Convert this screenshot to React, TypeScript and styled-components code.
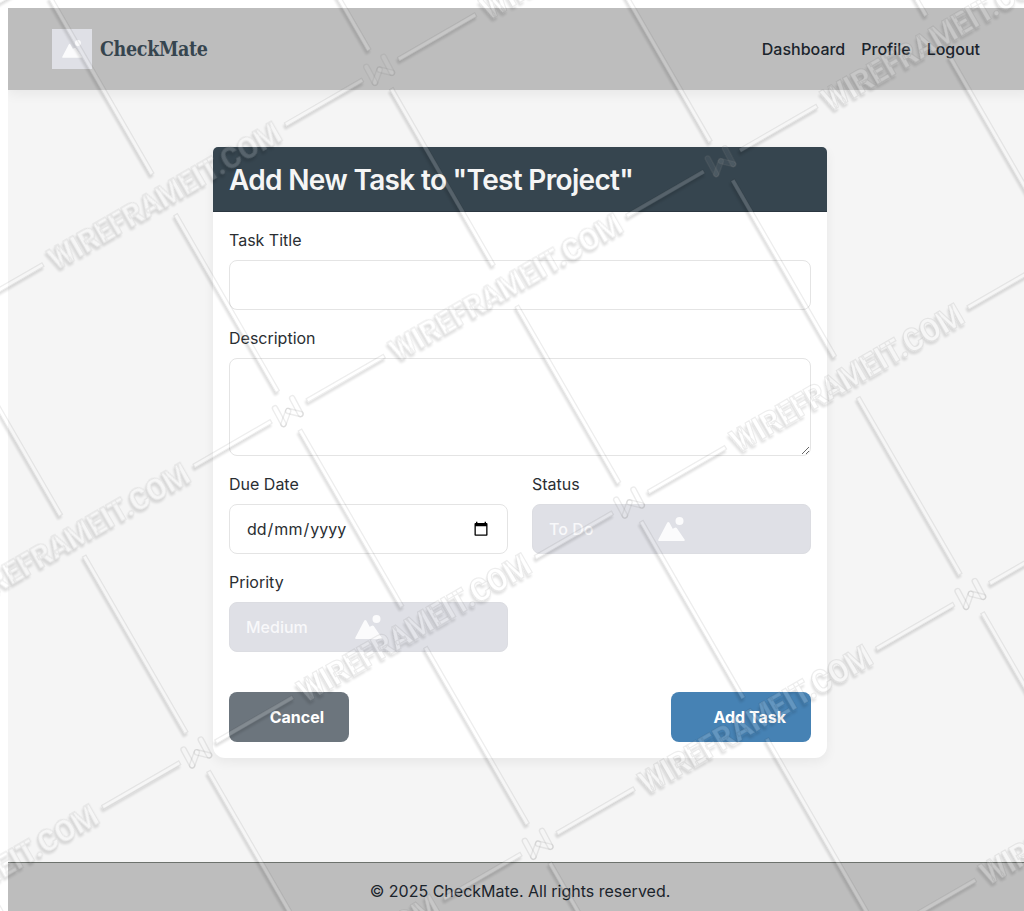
import React from "react";
import styled, { createGlobalStyle } from "styled-components";

const GlobalStyle = createGlobalStyle`
  *, *::before, *::after { box-sizing: border-box; }
  html { overflow: hidden; background: #fff; }
  body {
    margin: 8px 0 0 8px;
    font-family: Inter, "Liberation Sans", sans-serif;
    font-size: 16px;
    line-height: 24px;
    color: #2a2e32;
  }
`;

const Page = styled.div`
  display: flex;
  flex-direction: column;
  width: 1024px;
  height: 911px;
  background: #f5f5f5;
`;

const TopBar = styled.header`
  display: flex;
  align-items: center;
  justify-content: space-between;
  flex: none;
  height: 82px;
  padding: 0 52px 0 44px;
  background: #bdbdbd;
  box-shadow: 0 4px 12px rgba(0, 0, 0, 0.06);
`;

const Brand = styled.div`
  display: flex;
  align-items: center;
  gap: 8px;
`;

const LogoTile = styled.span`
  display: flex;
  align-items: center;
  justify-content: center;
  width: 40px;
  height: 40px;
  background: #dfe0e6;
`;

const BrandName = styled.span`
  padding-top: 2px;
  font-family: "Roboto Slab", "DejaVu Serif Condensed", "DejaVu Serif", serif;
  font-size: 19.5px;
  font-weight: 700;
  letter-spacing: -0.35px;
  color: #36454f;
`;

const Nav = styled.nav`
  display: flex;
  gap: 16px;
`;

const NavLink = styled.a`
  font-weight: 500;
  color: #1b242c;
`;

const Main = styled.main`
  display: flex;
  flex: none;
  justify-content: center;
  align-items: flex-start;
  height: 772px;
  padding-top: 57px;
`;

const Card = styled.section`
  width: 614px;
  background: #fff;
  border-radius: 5px 5px 12px 12px;
  box-shadow: 0 4px 12px rgba(0, 0, 0, 0.06);
`;

const CardHeader = styled.div`
  height: 65px;
  padding: 16px;
  background: #36454f;
  border-bottom: 1px solid #2b3740;
  border-radius: 5px 5px 0 0;
`;

const CardTitle = styled.h1`
  margin: 0;
  font-size: 28px;
  font-weight: 600;
  line-height: 34px;
  letter-spacing: -0.68px;
  color: #f5f5f5;
  white-space: nowrap;
`;

const Form = styled.form`
  display: flex;
  flex-direction: column;
  gap: 16px;
  padding: 16px;
`;

const Field = styled.div`
  display: flex;
  flex-direction: column;
  gap: 8px;
`;

const FieldGrid = styled.div`
  display: grid;
  grid-template-columns: 1fr 1fr;
  gap: 16px 24px;
`;

const TextInput = styled.input`
  height: 50px;
  padding: 12px 16px;
  border: 1px solid #e4e4e4;
  border-radius: 8px;
  background: #fff;
  font: inherit;
`;

const TextArea = styled.textarea`
  display: block;
  height: 98px;
  padding: 12px 16px;
  border: 1px solid #e4e4e4;
  border-radius: 8px;
  background: #fff;
  font: inherit;
  resize: vertical;
`;

const DateBox = styled.div`
  display: flex;
  align-items: center;
  justify-content: space-between;
  height: 50px;
  padding: 0 18px 0 16px;
  border: 1px solid #e4e4e4;
  border-radius: 8px;
`;

const DateParts = styled.span`
  display: flex;
`;

const DatePart = styled.span`
  padding: 0 1px;
`;

const SelectBox = styled.div`
  display: grid;
  grid-template-columns: 1fr auto 1fr;
  align-items: center;
  height: 50px;
  padding: 0 16px;
  border: 1px solid #dcdde2;
  border-radius: 8px;
  background: #dfe0e6;
  font-weight: 500;
  color: #f8f8fa;
`;

const Actions = styled.div`
  display: flex;
  justify-content: space-between;
  padding-top: 24px;
`;

const Button = styled.button<{ $primary?: boolean }>`
  width: ${(p) => (p.$primary ? 140 : 120)}px;
  height: 50px;
  padding: 0 25px 0 0;
  border: 0;
  border-radius: 8px;
  background: ${(p) => (p.$primary ? "#4682b4" : "#6c757d")};
  color: #fff;
  font: inherit;
  font-weight: 700;
  text-align: right;
`;

const Footer = styled.footer`
  flex: none;
  height: 57px;
  padding-top: 16px;
  border-top: 1px solid #6d726d;
  background: #bdbdbd;
  text-align: center;
  color: #1b242c;
`;

const Overlay = styled.svg`
  position: fixed;
  inset: 0;
  pointer-events: none;
`;

function Mountains({ width }: { width: number }) {
  return (
    <svg width={width} height={(width * 24) / 27} viewBox="0 0 27 24" fill="#fbfbfc">
      <circle cx="21.5" cy="4" r="4" />
      <path d="M9.3 5.6Q10.3 4.2 11.3 5.6L14.7 11.8L16.9 10.7Q17.8 10 18.7 11L26.6 22.6Q27.2 24 25.8 24H1.2Q-.3 24 .4 22.6Z" />
    </svg>
  );
}

function CalendarIcon() {
  return (
    <svg width="16" height="16" viewBox="0 0 16 16">
      <path
        fill="#000"
        fillRule="evenodd"
        d="M3 .7h1.4V2h7.2V.7H13V2h.6q.9 0 .9.9v11q0 .8-.9.8H2.4q-.9 0-.9-.8v-11q0-.9.9-.9H3zM2.8 5.2v8.2h10.4V5.2z"
      />
    </svg>
  );
}

const ORIGIN = { x: 289, y: 411 };
const STEP = { x: 341.3, y: 91.4 };

const nodes: { x: number; y: number }[] = [];
for (let i = -3; i <= 3; i++) {
  for (let j = -3; j <= 3; j++) {
    const x = ORIGIN.x + i * STEP.x - j * STEP.y;
    const y = ORIGIN.y + i * STEP.y + j * STEP.x;
    const onScreen = x > -480 && x < 1280 && y > -480 && y < 1180;
    if (onScreen) nodes.push({ x, y });
  }
}

const captionNodes = nodes.filter(
  ({ x, y }) => x + 345 > 0 && x + 90 < 1024 && y - 40 > 0 && y - 205 < 911
);

function Bars() {
  return (
    <>
      <rect x="21" y="-2" width="89" height="4" />
      <rect x="390" y="-2" width="89" height="4" />
      <rect x="-2" y="22" width="4" height="204" />
      <rect x="-2" y="273" width="4" height="204" />
    </>
  );
}

function Caption() {
  return (
    <text x="118.5" y="11.5" textLength="263" lengthAdjust="spacingAndGlyphs">
      WIREFRAMEIT.COM
    </text>
  );
}

const place = (n: { x: number; y: number }) => `translate(${n.x} ${n.y}) rotate(-30)`;

function Pattern() {
  return (
    <>
      {nodes.map((n, i) => (
        <g key={i} transform={place(n)}>
          <Bars />
        </g>
      ))}
      {captionNodes.map((n, i) => (
        <g key={i} transform={place(n)}>
          <Caption />
        </g>
      ))}
    </>
  );
}

const monogram = [
  [-14, -2.7, -5.5, 13],
  [-5.5, 13, -0.8, 0],
  [-0.8, 0, 11.5, 3],
  [11.5, 3, 3.2, -12.7],
];

function Monogram() {
  return (
    <>
      {monogram.map(([x1, y1, x2, y2], i) => {
        const length = Math.hypot(x2 - x1, y2 - y1);
        const angle = (Math.atan2(y2 - y1, x2 - x1) * 180) / Math.PI;
        return (
          <rect
            key={i}
            x="-2.6"
            y="-2.6"
            width={length + 5.2}
            height="5.2"
            rx="2.6"
            transform={`translate(${x1} ${y1}) rotate(${angle})`}
          />
        );
      })}
    </>
  );
}

function Watermark() {
  return (
    <Overlay width="1024" height="911" viewBox="0 0 1024 911" aria-hidden="true">
      <defs>
        <filter
          id="shade"
          filterUnits="userSpaceOnUse"
          x="-10"
          y="-10"
          width="1044"
          height="931"
          colorInterpolationFilters="sRGB"
        >
          <feOffset in="SourceAlpha" dx="-1.4" dy="2.6" />
          <feGaussianBlur stdDeviation="1.3" result="cast" />
          <feComposite in="cast" in2="SourceAlpha" operator="out" />
        </filter>
      </defs>
      <g fontFamily="Roboto, sans-serif" fontWeight="800" fontSize="32">
        <g filter="url(#shade)" opacity="0.12" stroke="#000" strokeWidth="1">
          <Pattern />
        </g>
        <g fill="#fff" fillOpacity="0.16" stroke="#000" strokeOpacity="0.07" strokeWidth="1.3">
          <Pattern />
        </g>
        <g fill="#fff" fillOpacity="0.06" stroke="#808080" strokeOpacity="0.15" strokeWidth="1.4">
          {nodes.map((n, i) => (
            <g key={i} transform={`translate(${n.x} ${n.y})`}>
              <Monogram />
            </g>
          ))}
        </g>
      </g>
    </Overlay>
  );
}

export default function App() {
  return (
    <>
      <GlobalStyle />
      <Page>
        <TopBar>
          <Brand>
            <LogoTile>
              <Mountains width={20} />
            </LogoTile>
            <BrandName>CheckMate</BrandName>
          </Brand>
          <Nav>
            <NavLink>Dashboard</NavLink>
            <NavLink>Profile</NavLink>
            <NavLink>Logout</NavLink>
          </Nav>
        </TopBar>
        <Main>
          <Card>
            <CardHeader>
              <CardTitle>Add New Task to "Test Project"</CardTitle>
            </CardHeader>
            <Form>
              <Field>
                <label htmlFor="title">Task Title</label>
                <TextInput id="title" />
              </Field>
              <Field>
                <label htmlFor="description">Description</label>
                <TextArea id="description" />
              </Field>
              <FieldGrid>
                <Field>
                  <span>Due Date</span>
                  <DateBox>
                    <DateParts>
                      <DatePart>dd</DatePart>/<DatePart>mm</DatePart>/<DatePart>yyyy</DatePart>
                    </DateParts>
                    <CalendarIcon />
                  </DateBox>
                </Field>
                <Field>
                  <span>Status</span>
                  <SelectBox>
                    <span>To Do</span>
                    <Mountains width={27} />
                  </SelectBox>
                </Field>
                <Field>
                  <span>Priority</span>
                  <SelectBox>
                    <span>Medium</span>
                    <Mountains width={27} />
                  </SelectBox>
                </Field>
              </FieldGrid>
              <Actions>
                <Button type="button">Cancel</Button>
                <Button type="button" $primary>
                  Add Task
                </Button>
              </Actions>
            </Form>
          </Card>
        </Main>
        <Footer>© 2025 CheckMate. All rights reserved.</Footer>
      </Page>
      <Watermark />
    </>
  );
}
